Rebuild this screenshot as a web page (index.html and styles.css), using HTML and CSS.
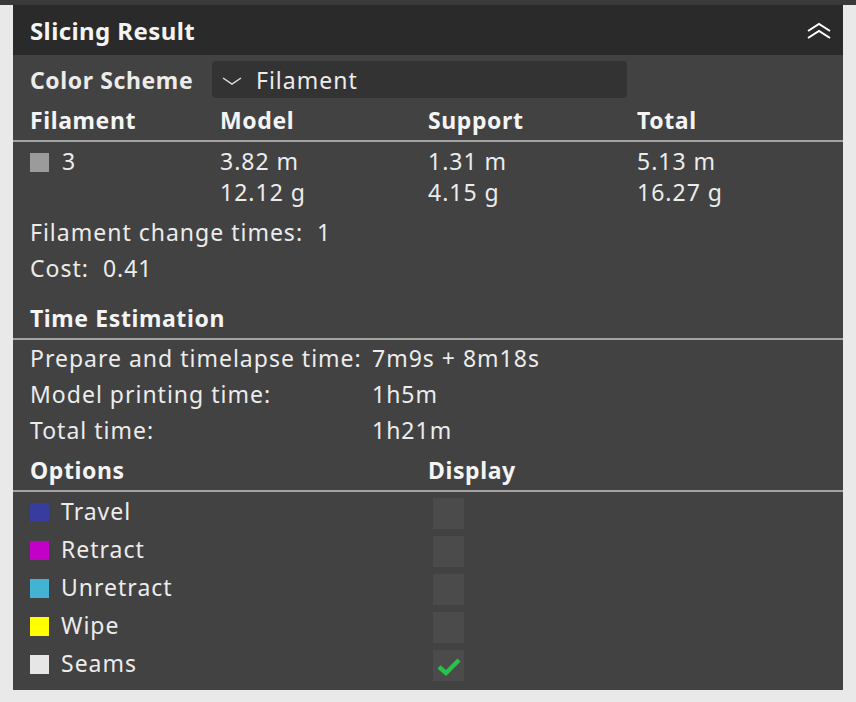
FILE: index.html
```html
<!DOCTYPE html>
<html lang="en">
<head>
	<meta charset="UTF-8">
	<title>Slicing Result</title>
	<link rel="stylesheet" href="styles.css">
</head>
<body>
	<div class="topbar"></div>
	<div class="panel">
		<div class="title">
			<span>Slicing Result</span>
			<svg class="collapse" width="26" height="18" viewBox="0 0 26 18">
				<polyline points="2,9 13,2 24,9" fill="none" stroke="#fff" stroke-width="2"/>
				<polyline points="2,16 13,9 24,16" fill="none" stroke="#fff" stroke-width="2"/>
			</svg>
		</div>
		<div class="scheme">
			<span class="bold">Color Scheme</span>
			<div class="select">
				<svg width="22" height="10" viewBox="0 0 22 10"><polyline points="2,2 11,8 20,2" fill="none" stroke="#ddd" stroke-width="1.5"/></svg>
				<span>Filament</span>
			</div>
		</div>

		<!-- filament table -->
		<div class="grid head line">
			<span>Filament</span><span>Model</span><span>Support</span><span>Total</span>
		</div>
		<div class="grid data">
			<span><i class="swatch" style="background:#9b9b9b"></i>3</span>
			<span>3.82 m<br>12.12 g</span>
			<span>1.31 m<br>4.15 g</span>
			<span>5.13 m<br>16.27 g</span>
		</div>
		<div class="info">
			<div>Filament change times:&nbsp; 1</div>
			<div>Cost:&nbsp; 0.41</div>
		</div>

		<!-- time -->
		<div class="section line bold">Time Estimation</div>
		<div class="times">
			<span>Prepare and timelapse time:</span><span>7m9s + 8m18s</span>
			<span>Model printing time:</span><span>1h5m</span>
			<span>Total time:</span><span>1h21m</span>
		</div>

		<!-- options -->
		<div class="grid opts head line">
			<span>Options</span><span>Display</span>
		</div>
		<div class="grid opts rows">
			<span><i class="swatch" style="background:#383c9c"></i>Travel</span><span><i class="check"></i></span>
			<span><i class="swatch" style="background:#c300c8"></i>Retract</span><span><i class="check"></i></span>
			<span><i class="swatch" style="background:#44b2d2"></i>Unretract</span><span><i class="check"></i></span>
			<span><i class="swatch" style="background:#ffff00"></i>Wipe</span><span><i class="check"></i></span>
			<span><i class="swatch" style="background:#e6e6e6"></i>Seams</span>
			<span><i class="check"><svg width="26" height="22" viewBox="0 0 26 22"><polyline points="3,12 10,18 23,5" fill="none" stroke="#26c24a" stroke-width="4.5"/></svg></i></span>
		</div>
	</div>
</body>
</html>
```

FILE: styles.css
```css
*{margin:0;padding:0;box-sizing:border-box;}
body{background:#e9e9e9;font-family:"Noto Sans","Liberation Sans",sans-serif;font-size:23px;letter-spacing:1px;color:#ececec;}
.topbar{height:5px;background:#3a3a3a;}
.panel{width:830px;margin-left:13px;background:#424242;padding-bottom:8px;}
.bold{font-weight:bold;letter-spacing:0.6px;}
.title{height:50px;background:#2a2a2a;display:flex;align-items:center;justify-content:space-between;padding:0 11px 0 17px;font-size:24px;font-weight:bold;letter-spacing:0.4px;color:#f4f4f4;}
.collapse{margin-top:2px;}
.scheme{display:flex;align-items:center;height:37px;margin-top:6px;padding-left:17px;}
.scheme .bold{width:182px;white-space:nowrap;}
.select{width:415px;height:37px;background:#333333;border-radius:4px;display:flex;align-items:center;padding-left:9px;}
.select svg{margin-right:13px;margin-top:2px;}
.line{border-bottom:2px solid #a3a3a3;}
.grid{display:grid;grid-template-columns:190px 208px 209px 1fr;padding-left:17px;}
.head{height:44px;line-height:44px;font-weight:bold;letter-spacing:0.6px;color:#f4f4f4;}
.data{padding-top:4px;line-height:31px;}
.swatch{display:inline-block;width:19px;height:19px;margin-right:12px;vertical-align:-2px;}
.data .swatch{margin-right:13px;}
.info{margin-top:6px;padding-left:17px;line-height:36px;}
.section{margin-top:10px;height:44px;line-height:44px;padding-left:17px;color:#f4f4f4;}
.times{display:grid;grid-template-columns:342px 1fr;padding-left:17px;line-height:36px;white-space:nowrap;}
.opts{grid-template-columns:398px 1fr;}
.rows{line-height:38px;}
.rows .swatch{margin-right:12px;}
.check{display:inline-block;width:31px;height:31px;background:#4b4b4b;vertical-align:middle;margin-left:5px;}
.check svg{display:block;margin:5px auto 0;}
```
